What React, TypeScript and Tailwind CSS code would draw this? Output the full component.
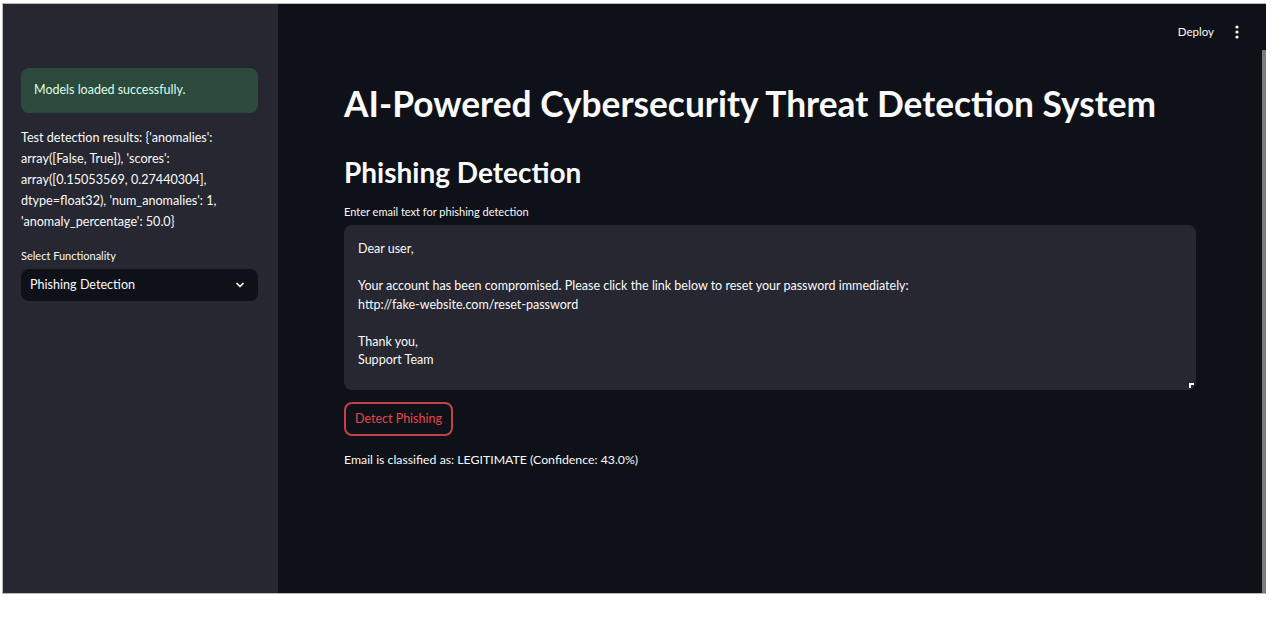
import React from "react";

const font = { fontFamily: "Lato, 'Noto Sans', sans-serif" };

const App: React.FC = () => {
    return (
        <div className="w-full h-[623px] bg-white" style={font}>
            <div className="ml-[2px] pt-[3px] w-[1264px]">
                <div className="flex h-[591px] border-l border-t border-b border-[#b9b9bd]">
                    {/* sidebar */}
                    <aside className="w-[275px] bg-[#262730] pl-[18px] pr-[20px] pt-[64px] text-[#fafafa]">
                        <div className="rounded-lg bg-[#2c4a3b] h-[45px] flex items-center px-[13px] text-[12.5px] text-[#dffde9]">
                            Models loaded successfully.
                        </div>
                        <p className="mt-[14px] text-[12.6px] leading-[21px]">
                            Test detection results: {"{'anomalies':"} array([False, True]), 'scores': array([0.15053569, 0.27440304], dtype=float32), 'num_anomalies': 1, 'anomaly_percentage': 50.0{"}"}
                        </p>
                        <p className="mt-[16px] text-[11px] leading-[16px]">Select Functionality</p>
                        <div className="mt-[5px] h-[32px] rounded-lg bg-[#0e1117] flex items-center justify-between pl-[9px] pr-[12px] text-[12.6px]">
                            <span>Phishing Detection</span>
                            <svg width="12" height="12" viewBox="0 0 24 24" fill="none" stroke="#fafafa" strokeWidth="3.5" strokeLinecap="round" strokeLinejoin="round">
                                <path d="M6 9l6 6 6-6" />
                            </svg>
                        </div>
                    </aside>

                    {/* main */}
                    <main className="relative flex-1 bg-[#0e1117] text-[#fafafa]">
                        <div className="flex justify-end items-center h-[56px] pr-[27px] gap-[21px]">
                            <span className="text-[11.5px]">Deploy</span>
                            <svg width="4" height="14" viewBox="0 0 4 14" fill="#fafafa">
                                <circle cx="2" cy="2" r="1.6" />
                                <circle cx="2" cy="7" r="1.6" />
                                <circle cx="2" cy="12" r="1.6" />
                            </svg>
                        </div>
                        <div className="absolute right-0 top-[46px] bottom-0 w-[4px] bg-[#7b7b7e]" />

                        <div className="pl-[66px] w-[918px]">
                            <h1 className="mt-[22px] text-[35.3px] font-bold leading-[44px] whitespace-nowrap">
                                AI-Powered Cybersecurity Threat Detection System
                            </h1>
                            <h2 className="mt-[28px] text-[28px] font-bold leading-[36px]">Phishing Detection</h2>
                            <p className="mt-[14px] text-[11px] leading-[16px]">Enter email text for phishing detection</p>
                            <div className="relative mt-[5px] h-[165px] rounded-lg bg-[#262730] px-[14px] pt-[15px] text-[12.5px] leading-[18.5px] whitespace-pre">
                                {"Dear user,\n\nYour account has been compromised. Please click the link below to reset your password immediately:\nhttp://fake-website.com/reset-password\n\nThank you,\nSupport Team"}
                                <div className="absolute right-[2px] bottom-[2px] w-[5px] h-[5px] border-l-2 border-t-2 border-white" />
                            </div>
                            <button className="mt-[12px] h-[34px] px-[9px] rounded-lg border-2 border-[#c2414a] text-[12.5px] text-[#e8454d]">
                                Detect Phishing
                            </button>
                            <p className="mt-[15px] text-[12.3px]">Email is classified as: LEGITIMATE (Confidence: 43.0%)</p>
                        </div>
                    </main>
                </div>
            </div>
        </div>
    );
};

export default App;
